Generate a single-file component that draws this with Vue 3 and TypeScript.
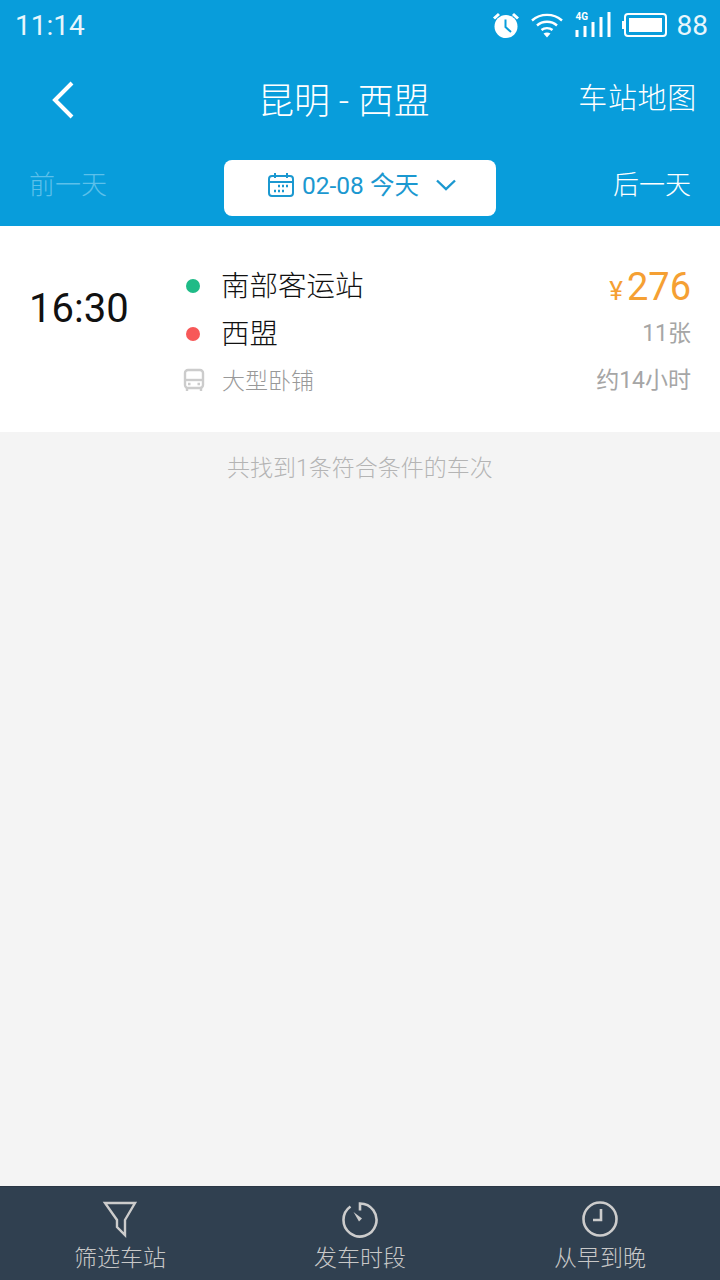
<script setup lang="ts">
const tabs = [
  { key: 'filter', label: '筛选车站' },
  { key: 'time', label: '发车时段' },
  { key: 'order', label: '从早到晚' }
]
</script>

<template>
  <div class="page">
    <div class="top">
      <div class="status">
        <span class="clock">11:14</span>
        <div class="status-icons">
          <svg class="ic-alarm" width="28" height="28" viewBox="0 0 28 28">
            <circle cx="14" cy="15.5" r="11.5" fill="#fff" />
            <path d="M2 7.5 7 3M26 7.5 21 3" stroke="#fff" stroke-width="3" fill="none" />
            <path d="M13.5 8.5V16l5.5 5" stroke="#089ddb" stroke-width="2" fill="none" />
          </svg>
          <svg class="ic-wifi" width="32" height="26" viewBox="0 0 32 26">
            <path d="M1 8.5C9.500 1 22.500 1 31 8.500M6 13.500C11.500 8.500 20.500 8.500 26 13.500M10.500 18C13.500 15.500 18.500 15.500 21.500 18" stroke="#fff" stroke-width="2.400" fill="none" />
            <path d="M12.500 21.500C14.500 20 17.500 20 19.500 21.500L16 25.500Z" fill="#fff" />
          </svg>
          <div class="signal">
            <span class="four-g">4G</span>
            <svg width="37" height="26" viewBox="0 0 37 26">
              <path d="M2 25v-7M10 25V14M18 25V10M26 25V5M34 25V0" stroke="#fff" stroke-width="3" fill="none" />
            </svg>
          </div>
          <svg class="ic-batt" width="45" height="24" viewBox="0 0 45 24">
            <rect x="3" y="1" width="41" height="22" rx="3" stroke="#fff" stroke-width="2" fill="none" />
            <rect x="7" y="5" width="33" height="14" fill="#fff" />
            <path d="M1 8v8" stroke="#fff" stroke-width="2" />
          </svg>
          <span class="level">88</span>
        </div>
      </div>
      <div class="nav">
        <svg class="back" width="26" height="38" viewBox="0 0 26 38">
          <path d="M22 2 5 19l17 17" stroke="#fff" stroke-width="4" fill="none" />
        </svg>
        <div class="title">昆明 - 西盟</div>
        <div class="map">车站地图</div>
      </div>
      <div class="days">
        <span class="prev">前一天</span>
        <div class="picker">
          <svg width="28" height="26" viewBox="0 0 28 26">
            <rect x="2" y="4" width="24" height="20" rx="3" stroke="#1b98d0" stroke-width="2" fill="none" />
            <path d="M2 10h24M8 1v5M20 1v5" stroke="#1b98d0" stroke-width="2" fill="none" />
            <path d="M11 14h2M15 14h2M19 14h2M7 19h2M11 19h2M15 19h2" stroke="#1b98d0" stroke-width="2.500" />
          </svg>
          <span class="picker-text">02-08 今天</span>
          <svg class="chev" width="20" height="12" viewBox="0 0 20 12">
            <path d="M1 1.500 10 10l9-8.500" stroke="#1b98d0" stroke-width="2.400" fill="none" />
          </svg>
        </div>
        <span class="next">后一天</span>
      </div>
    </div>

    <div class="card">
      <div class="depart">16:30</div>
      <div class="mid">
        <div class="stop first"><i class="dot green"></i><span>南部客运站</span></div>
        <div class="stop"><i class="dot red"></i><span>西盟</span></div>
        <div class="type">
          <svg width="22" height="24" viewBox="0 0 22 24">
            <rect x="2" y="2" width="18" height="18" rx="3" stroke="#ccc" stroke-width="2.400" fill="none" />
            <path d="M2 12h18" stroke="#ccc" stroke-width="2.400" />
            <path d="M5 16h2.500M14.500 16H17M4 20v3M18 20v3" stroke="#ccc" stroke-width="2.400" />
          </svg>
          <span>大型卧铺</span>
        </div>
      </div>
      <div class="right">
        <div class="price"><small>¥</small>276</div>
        <div class="seats">11张</div>
        <div class="dur">约14小时</div>
      </div>
    </div>

    <div class="count">共找到1条符合条件的车次</div>

    <div class="tabs">
      <div v-for="tab in tabs" :key="tab.key" class="tab">
        <svg width="40" height="38" viewBox="0 0 40 38">
          <template v-if="tab.key === 'filter'">
            <path d="M5 3h30L25 20v15l-8-8v-7Z" stroke="#ccc" stroke-width="2.400" fill="none" />
          </template>
          <template v-else-if="tab.key === 'time'">
            <path d="M10.500 6.500A16.500 16.500 0 1 0 20 3.500v7" stroke="#ccc" stroke-width="2.600" fill="none" />
            <path d="M13.500 12 22 18.500 19 21.500Z" fill="#ccc" />
          </template>
          <template v-else>
            <circle cx="20" cy="19" r="16.500" stroke="#ccc" stroke-width="2.600" fill="none" />
            <path d="M21 9v11h-8" stroke="#ccc" stroke-width="2.600" fill="none" />
          </template>
        </svg>
        <span>{{ tab.label }}</span>
      </div>
    </div>
  </div>
</template>

<style>
body {
  margin: 0;
}
</style>

<style scoped>
.page {
  width: 720px;
  height: 1280px;
  display: flex;
  flex-direction: column;
  background: #f4f4f4;
  font-family: Roboto, "Noto Sans CJK SC", sans-serif;
  font-weight: 300;
  overflow: hidden;
}
.top {
  height: 226px;
  flex: none;
  background: #089ddb;
  color: #fff;
}
.status {
  height: 50px;
  display: flex;
  align-items: center;
  justify-content: space-between;
  padding: 0 13px 0 15px;
}
.clock {
  font-size: 28px;
  font-weight: 400;
  color: #e8f6fc;
}
.status-icons {
  display: flex;
  align-items: center;
  position: relative;
  left: 1px;
}
.ic-alarm {
  margin-right: 11px;
}
.ic-wifi {
  margin-right: 12px;
}
.signal {
  position: relative;
  margin-right: 10px;
  height: 26px;
}
.four-g {
  position: absolute;
  left: 1px;
  top: -1px;
  font-size: 10px;
  font-weight: 700;
}
.ic-batt {
  margin-right: 10px;
}
.level {
  font-size: 28px;
  font-weight: 400;
  color: #e8f6fc;
}
.nav {
  height: 100px;
  display: flex;
  align-items: center;
  padding-left: 50px;
}
.title {
  margin-left: 185px;
  font-size: 36px;
  white-space: nowrap;
  position: relative;
  top: -2px;
  left: -3px;
}
.map {
  margin-left: auto;
  margin-right: 23px;
  font-size: 29px;
  letter-spacing: 0.7px;
  position: relative;
  top: -4px;
}
.days {
  height: 56px;
  margin-top: 10px;
  display: flex;
  align-items: center;
  justify-content: space-between;
  padding: 0 29px;
  font-size: 26px;
}
.prev,
.next {
  position: relative;
  top: -6px;
}
.prev {
  color: #5cc0ea;
}
.picker {
  width: 272px;
  height: 56px;
  box-sizing: border-box;
  padding: 0 0 6px 3px;
  background: #fff;
  border-radius: 8px;
  display: flex;
  align-items: center;
  justify-content: center;
  color: #1b98d0;
}
.picker-text {
  margin-left: 7px;
  font-size: 24.5px;
  font-weight: 400;
  white-space: nowrap;
  position: relative;
  top: -2px;
}
.chev {
  margin-left: 17px;
}
.card {
  height: 206px;
  flex: none;
  box-sizing: border-box;
  background: #fff;
  display: flex;
  padding: 0 29px;
}
.depart {
  width: 155px;
  font-size: 40px;
  font-weight: 400;
  line-height: 166px;
  color: #111;
}
.mid {
  flex: 1;
  padding-top: 36px;
}
.stop {
  height: 48px;
  display: flex;
  align-items: center;
  font-size: 28.5px;
  line-height: 44px;
  color: #111;
}
.stop span {
  position: relative;
  top: 1px;
}
.dot {
  width: 14px;
  height: 14px;
  border-radius: 50%;
  margin: 0 21px 0 2px;
}
.green {
  background: #1fbb87;
}
.red {
  background: #f75858;
}
.type {
  height: 44px;
  display: flex;
  align-items: center;
  font-size: 23px;
  color: #999;
}
.type span {
  position: relative;
  top: -1px;
}
.type svg {
  margin-right: 17px;
  margin-left: -1px;
}
.right {
  text-align: right;
  padding-top: 36px;
}
.price {
  height: 48px;
  line-height: 50px;
  font-size: 38px;
  font-weight: 400;
  color: #f5a033;
}
.price small {
  font-size: 26px;
  margin-right: 4px;
}
.seats {
  height: 48px;
  line-height: 48px;
  font-size: 23px;
  font-weight: 400;
  color: #a6a6a6;
}
.dur {
  height: 44px;
  line-height: 46px;
  font-size: 23px;
  font-weight: 400;
  color: #a6a6a6;
}
.count {
  flex: 1;
  text-align: center;
  font-size: 23px;
  line-height: 73px;
  color: #b4b4b4;
}
.tabs {
  height: 94px;
  flex: none;
  box-sizing: border-box;
  border-top: 1px solid #2a3644;
  background: #304050;
  display: flex;
}
.tab {
  flex: 1;
  display: flex;
  flex-direction: column;
  align-items: center;
  padding-top: 13px;
  color: #c8c8c8;
  font-size: 23px;
}
.tab span {
  margin-top: 4px;
  line-height: 34px;
}
</style>
